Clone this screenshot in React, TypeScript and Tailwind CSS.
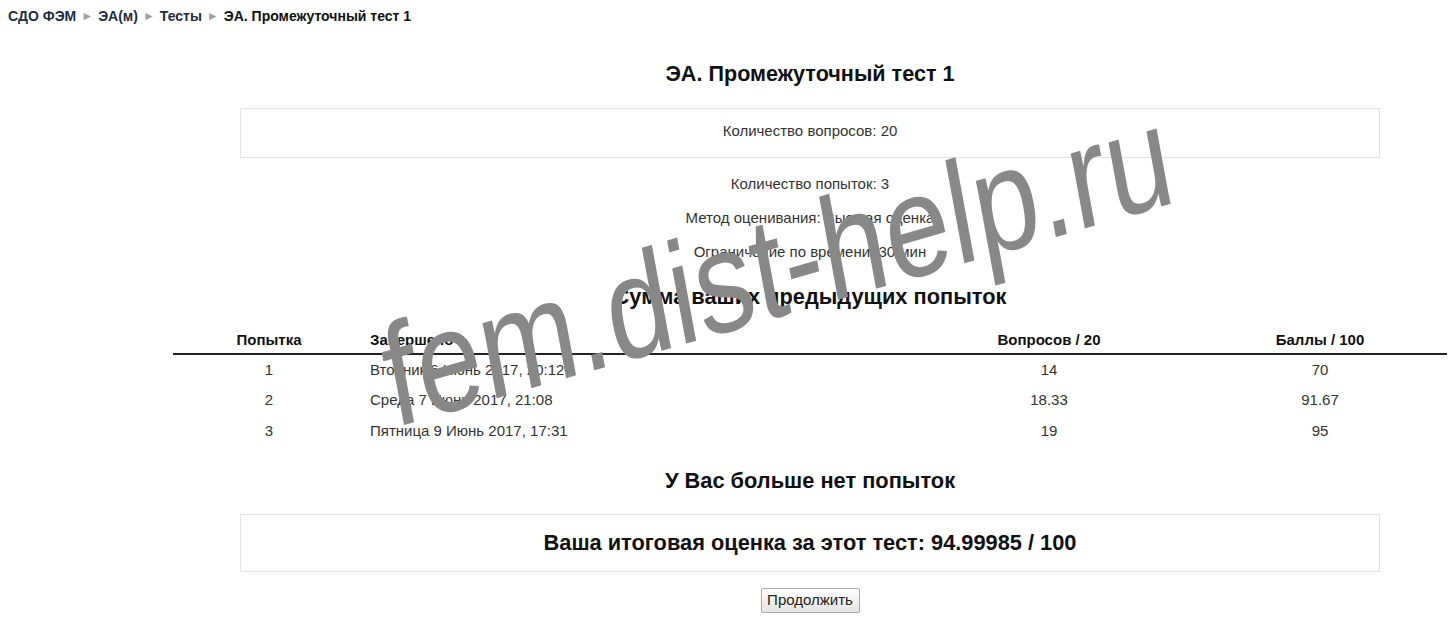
const ATTEMPTS = [
  { n: "1", done: "Вторник 6 Июнь 2017, 20:12", q: "14", score: "70" },
  { n: "2", done: "Среда 7 Июнь 2017, 21:08", q: "18.33", score: "91.67" },
  { n: "3", done: "Пятница 9 Июнь 2017, 17:31", q: "19", score: "95" },
];

const CRUMBS = ["СДО ФЭМ", "ЭА(м)", "Тесты"];

export default function App() {
  return (
    <div className="relative w-full h-[618px] overflow-hidden bg-white font-['Liberation_Sans',Arial,sans-serif] text-[15px] text-[#333]">
      {/* breadcrumb */}
      <div className="pl-2 pt-2 h-6 leading-4 text-[14px] font-bold flex items-center">
        {CRUMBS.map((c) => (
          <span key={c} className="flex items-center">
            <span className="text-[#1d2d44]">{c}</span>
            <span className="mx-[5px] text-[12px] text-[#a0a0a0]">►</span>
          </span>
        ))}
        <span className="text-[#111]">ЭА. Промежуточный тест 1</span>
      </div>

      <div className="ml-[173px] mr-[4px] flex flex-col items-center">
        <h2 className="mt-[38px] h-6 leading-6 text-[21.6px] font-bold text-[#111]">ЭА. Промежуточный тест 1</h2>

        <div className="mt-[22px] self-stretch mx-[67px] h-[50px] border border-[#e3e3e3] flex items-center justify-center pb-1">
          Количество вопросов: 20
        </div>

        <p className="mt-[18px] h-4 leading-4">Количество попыток: 3</p>
        <p className="mt-[18px] h-4 leading-4">Метод оценивания: Высшая оценка</p>
        <p className="mt-[18px] h-4 leading-4">Ограничение по времени: 30 мин</p>

        <h3 className="mt-[25px] h-6 leading-6 text-[21.8px] font-bold text-[#111]">Сумма ваших предыдущих попыток</h3>

        <table className="mt-[19px] w-full border-collapse table-fixed">
          <colgroup>
            <col className="w-[192px]" />
            <col className="w-[540px]" />
            <col className="w-[288px]" />
            <col className="w-[254px]" />
          </colgroup>
          <thead>
            <tr className="h-[26px] border-b-2 border-[#222] font-bold text-[#111]">
              <th className="text-center font-bold">Попытка</th>
              <th className="text-left pl-[5px] font-bold">Завершено</th>
              <th className="text-center font-bold">Вопросов / 20</th>
              <th className="text-center font-bold">Баллы / 100</th>
            </tr>
          </thead>
          <tbody>
            {ATTEMPTS.map((a) => (
              <tr key={a.n} className="h-[31px]">
                <td className="text-center">{a.n}</td>
                <td className="text-left pl-[5px]">{a.done}</td>
                <td className="text-center">{a.q}</td>
                <td className="text-center">{a.score}</td>
              </tr>
            ))}
          </tbody>
        </table>

        <h3 className="mt-[22px] h-6 leading-6 text-[21.8px] font-bold text-[#111]">У Вас больше нет попыток</h3>

        <div className="mt-[21px] self-stretch mx-[67px] h-[58px] border border-[#e3e3e3] flex items-center justify-center">
          <span className="text-[21.8px] font-bold text-[#111]">Ваша итоговая оценка за этот тест: 94.99985 / 100</span>
        </div>

        <button className="mt-[16px] w-[99px] h-[25px] border border-[#a9a9a9] rounded-[2px] bg-gradient-to-b from-white to-[#e4e4e4] text-[15px] text-[#222]">
          Продолжить
        </button>
      </div>

      {/* watermark */}
      <div className="absolute left-[777px] top-[266px] w-0 h-0 flex items-center justify-center pointer-events-none">
        <span className="whitespace-nowrap text-[146px] leading-none text-[#888] [transform:scaleX(0.8)_rotate(-13deg)]">
          fem.dist-help.ru
        </span>
      </div>
    </div>
  );
}
